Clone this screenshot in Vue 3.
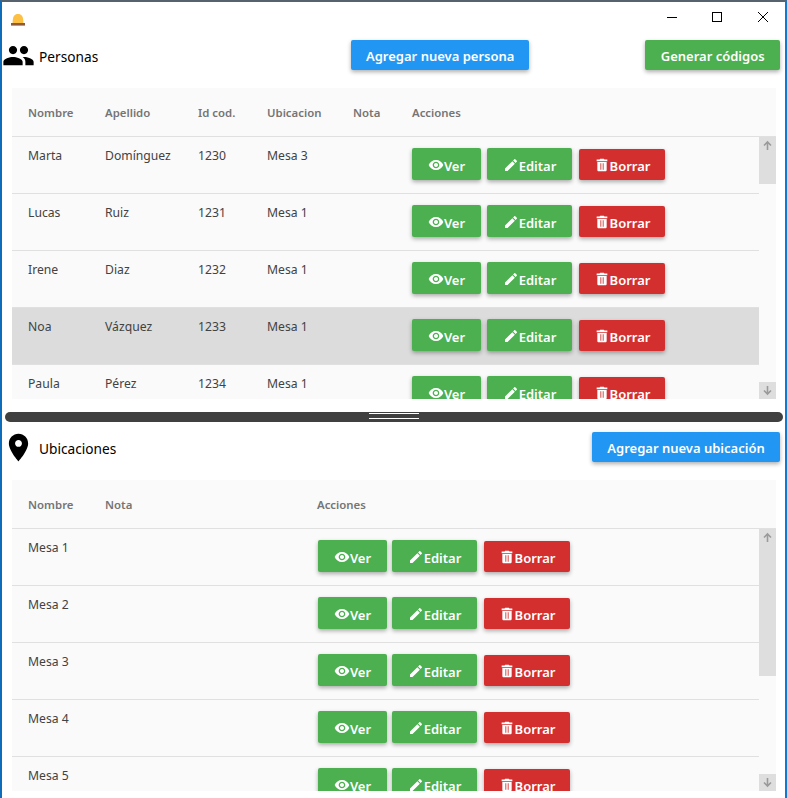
<script setup>
const people = [
  ['Marta', 'Domínguez', '1230', 'Mesa 3', false],
  ['Lucas', 'Ruiz', '1231', 'Mesa 1', false],
  ['Irene', 'Diaz', '1232', 'Mesa 1', false],
  ['Noa', 'Vázquez', '1233', 'Mesa 1', true],
  ['Paula', 'Pérez', '1234', 'Mesa 1', false],
]
const places = ['Mesa 1', 'Mesa 2', 'Mesa 3', 'Mesa 4', 'Mesa 5']
const eye = 'M12 4.5C7 4.5 2.73 7.61 1 12c1.73 4.39 6 7.5 11 7.5s9.27-3.11 11-7.5c-1.73-4.39-6-7.5-11-7.5zM12 17c-2.76 0-5-2.24-5-5s2.24-5 5-5 5 2.24 5 5-2.24 5-5 5zm0-8c-1.66 0-3 1.34-3 3s1.34 3 3 3 3-1.34 3-3-1.34-3-3-3z'
const pencil = 'M3 17.25V21h3.75L17.81 9.94l-3.75-3.75L3 17.25zM20.71 7.04c.39-.39.39-1.02 0-1.41l-2.34-2.34c-.39-.39-1.02-.39-1.41 0l-1.83 1.83 3.75 3.75 1.83-1.83z'
const trash = 'M5 19.5c0 1.1.9 2 2 2h10c1.1 0 2-.9 2-2V7.5H5v12zM9.6 9.5h1.3V19H9.6zM13.1 9.5h1.3V19h-1.3zM20 3.8h-4.3l-1-1.2H9.3l-1 1.2H4v2.5h16V3.8z'
</script>

<template>
  <div class="window">
    <div class="titlebar">
      <svg class="appicon" width="16" height="14" viewBox="0 0 16 14">
        <path d="M2.6 10C2.6 3 4.5 1 8 1s5.4 2 5.4 9z" fill="#fcc045" />
        <rect x="1" y="10" width="14" height="2.6" fill="#8f5a3c" />
      </svg>
      <div class="controls">
        <svg width="12" height="12" viewBox="0 0 12 12"><path d="M2 6.5h10" stroke="#000" fill="none" /></svg>
        <svg width="12" height="12" viewBox="0 0 12 12"><rect x="1.5" y="1.5" width="9" height="9" stroke="#000" fill="none" /></svg>
        <svg width="12" height="12" viewBox="0 0 12 12"><path d="M1 1l10 10M11 1L1 11" stroke="#000" fill="none" /></svg>
      </div>
    </div>

    <section class="panel panel-people">
      <div class="head">
        <svg class="head-icon" width="33" height="33" viewBox="0 0 24 24"><path d="M16 11c1.66 0 2.99-1.34 2.99-3S17.66 5 16 5c-1.66 0-3 1.34-3 3s1.34 3 3 3zm-8 0c1.66 0 2.99-1.34 2.99-3S9.66 5 8 5C6.34 5 5 6.34 5 8s1.34 3 3 3zm0 2c-2.33 0-7 1.17-7 3.5V19h14v-2.5c0-2.33-4.67-3.5-7-3.5zm8 0c-.29 0-.62.02-.97.05 1.16.84 1.97 1.97 1.97 3.45V19h6v-2.5c0-2.33-4.67-3.5-7-3.5z" /></svg>
        <span class="title">Personas</span>
        <button class="btn blue add-person">Agregar nueva persona</button>
        <button class="btn green gen">Generar códigos</button>
      </div>
      <div class="card">
        <div class="thead cols-people">
          <span>Nombre</span><span>Apellido</span><span>Id cod.</span><span>Ubicacion</span><span>Nota</span><span>Acciones</span>
        </div>
        <div class="tbody">
          <div class="rows">
            <div v-for="p in people" :key="p[2]" class="row cols-people" :class="{ hl: p[4] }">
              <span>{{ p[0] }}</span><span>{{ p[1] }}</span><span>{{ p[2] }}</span><span>{{ p[3] }}</span><span></span>
              <div class="actions">
                <button class="btn green act ver"><svg width="16" height="16" viewBox="0 0 24 24"><path :d="eye" /></svg>Ver</button>
                <button class="btn green act edit"><svg width="16" height="16" viewBox="0 0 24 24"><path :d="pencil" /></svg>Editar</button>
                <button class="btn red act del"><svg width="16" height="16" viewBox="0 0 24 24"><path :d="trash" fill-rule="evenodd" /></svg>Borrar</button>
              </div>
            </div>
          </div>
          <div class="scroll">
            <div class="thumb thumb-people"></div>
            <div class="arrow up">
              <svg width="11" height="11" viewBox="0 0 11 11"><path d="M5.5 10V2M2 5.5l3.5-3.5L9 5.5" /></svg>
            </div>
            <div class="arrow down">
              <svg width="11" height="11" viewBox="0 0 11 11"><path d="M5.5 1v8M2 5.5L5.5 9 9 5.5" /></svg>
            </div>
          </div>
        </div>
      </div>
    </section>

    <div class="splitter"><div class="grip"></div></div>

    <section class="panel panel-places">
      <div class="head">
        <svg class="head-icon" width="33" height="33" viewBox="0 0 24 24"><path d="M12 2C8.13 2 5 5.13 5 9c0 5.25 7 13 7 13s7-7.75 7-13c0-3.87-3.13-7-7-7zm0 9.5c-1.38 0-2.5-1.12-2.5-2.5s1.12-2.5 2.5-2.5 2.5 1.12 2.5 2.5-1.12 2.5-2.5 2.5z" /></svg>
        <span class="title">Ubicaciones</span>
        <button class="btn blue add-place">Agregar nueva ubicación</button>
      </div>
      <div class="card">
        <div class="thead cols-places">
          <span>Nombre</span><span>Nota</span><span>Acciones</span>
        </div>
        <div class="tbody">
          <div class="rows">
            <div v-for="m in places" :key="m" class="row cols-places">
              <span>{{ m }}</span><span></span>
              <div class="actions shift">
                <button class="btn green act ver"><svg width="16" height="16" viewBox="0 0 24 24"><path :d="eye" /></svg>Ver</button>
                <button class="btn green act edit tight"><svg width="16" height="16" viewBox="0 0 24 24"><path :d="pencil" /></svg>Editar</button>
                <button class="btn red act del"><svg width="16" height="16" viewBox="0 0 24 24"><path :d="trash" fill-rule="evenodd" /></svg>Borrar</button>
              </div>
            </div>
          </div>
          <div class="scroll">
            <div class="thumb thumb-places"></div>
            <div class="arrow up">
              <svg width="11" height="11" viewBox="0 0 11 11"><path d="M5.5 10V2M2 5.5l3.5-3.5L9 5.5" /></svg>
            </div>
            <div class="arrow down">
              <svg width="11" height="11" viewBox="0 0 11 11"><path d="M5.5 1v8M2 5.5L5.5 9 9 5.5" /></svg>
            </div>
          </div>
        </div>
      </div>
    </section>
  </div>
</template>

<style scoped>
.window {
  width: 787px;
  height: 798px;
  box-sizing: border-box;
  background: #fff;
  border-top: 2px solid #56636e;
  border-left: 2px solid #0f6cb8;
  border-right: 2px solid #0f7ad6;
  overflow: hidden;
  font-family: "Noto Sans", "Open Sans", sans-serif;
  color: #424242;
}
.titlebar {
  height: 30px;
  display: flex;
  align-items: center;
  position: relative;
}
.appicon { margin: 6px 0 0 8px; }
.controls {
  margin-left: auto;
  display: flex;
  gap: 34px;
  margin-right: 16px;
  align-items: center;
  margin-top: -1px;
}
.head {
  display: flex;
  align-items: center;
  height: 46px;
}
.head-icon { flex: none; }
.title { margin-left: 4px; padding-top: 2px; font-size: 13.7px; color: #000; }
.btn {
  border: 0;
  border-radius: 2px;
  color: #fff;
  font-family: "Noto Sans", "Open Sans", sans-serif;
  font-weight: 600;
  font-size: 13px;
  display: flex;
  align-items: center;
  justify-content: center;
  padding: 1px 0 0;
  box-shadow: 0 2px 4px rgba(0, 0, 0, 0.32);
}
.blue { background: #2196f3; }
.green { background: #4caf50; }
.red { background: #d32f2f; }
.add-person { width: 178px; height: 30px; margin-left: 253px; }
.gen { width: 135px; height: 30px; margin-left: 116px; }
.add-place { width: 188px; height: 30px; margin-left: auto; margin-right: 5px; }
.card {
  margin: 10px 9px 0 10px;
  height: 311px;
  background: #fafafa;
  display: flex;
  flex-direction: column;
}
.thead {
  height: 48px;
  flex: none;
  border-bottom: 1px solid #e0e0e0;
  font-size: 11.4px;
  font-weight: 600;
  color: #757575;
  align-items: center;
}
.cols-people {
  display: grid;
  grid-template-columns: 77px 93px 69px 86px 59px 1fr;
  padding-left: 16px;
}
.cols-places {
  display: grid;
  grid-template-columns: 77px 212px 1fr;
  padding-left: 16px;
}
.tbody {
  flex: 1;
  min-height: 0;
  display: flex;
}
.rows {
  flex: 1;
  min-width: 0;
  overflow: hidden;
}
.row {
  height: 57px;
  box-sizing: border-box;
  border-bottom: 1px solid #e0e0e0;
  font-size: 12.2px;
  line-height: 18px;
  padding-top: 10px;
  align-items: start;
}
.row.hl { background: #dcdcdc; }
.actions {
  display: flex;
  align-items: flex-start;
  gap: 6px;
  margin-top: 1px;
}
.actions.shift { margin-left: 1px; }
.act { height: 32px; padding-top: 3px; }
.act svg { fill: #fff; flex: none; margin-top: -2px; }
.ver { width: 69px; }
.edit { width: 85px; }
.del { width: 86px; height: 31px; margin: 1px 0 0 1px; padding-top: 2px; }
.tight { margin-left: -1px; }
.scroll {
  width: 17px;
  flex: none;
  position: relative;
  background: #fafafa;
}
.thumb { background: #dedede; }
.thumb-people { height: 47px; }
.thumb-places { height: 147px; }
.arrow {
  position: absolute;
  left: 0;
  width: 17px;
  height: 17px;
  display: flex;
  align-items: center;
  justify-content: center;
}
.arrow svg { fill: none; stroke: #9a9a9a; stroke-width: 1.6; }
.up { top: 0; }
.down { bottom: 0; background: #dedede; }
.splitter {
  height: 10px;
  margin: 13px 2px 0 3px;
  background: #404040;
  border-radius: 5px;
  display: flex;
  justify-content: center;
}
.grip {
  width: 50px;
  height: 6px;
  margin-top: 1px;
  box-sizing: border-box;
  border-top: 1px solid #fff;
  border-bottom: 1px solid #fff;
}
.panel-places .head { height: 32px; margin-top: 9px; }
.panel-places .card { margin-top: 17px; }
</style>
